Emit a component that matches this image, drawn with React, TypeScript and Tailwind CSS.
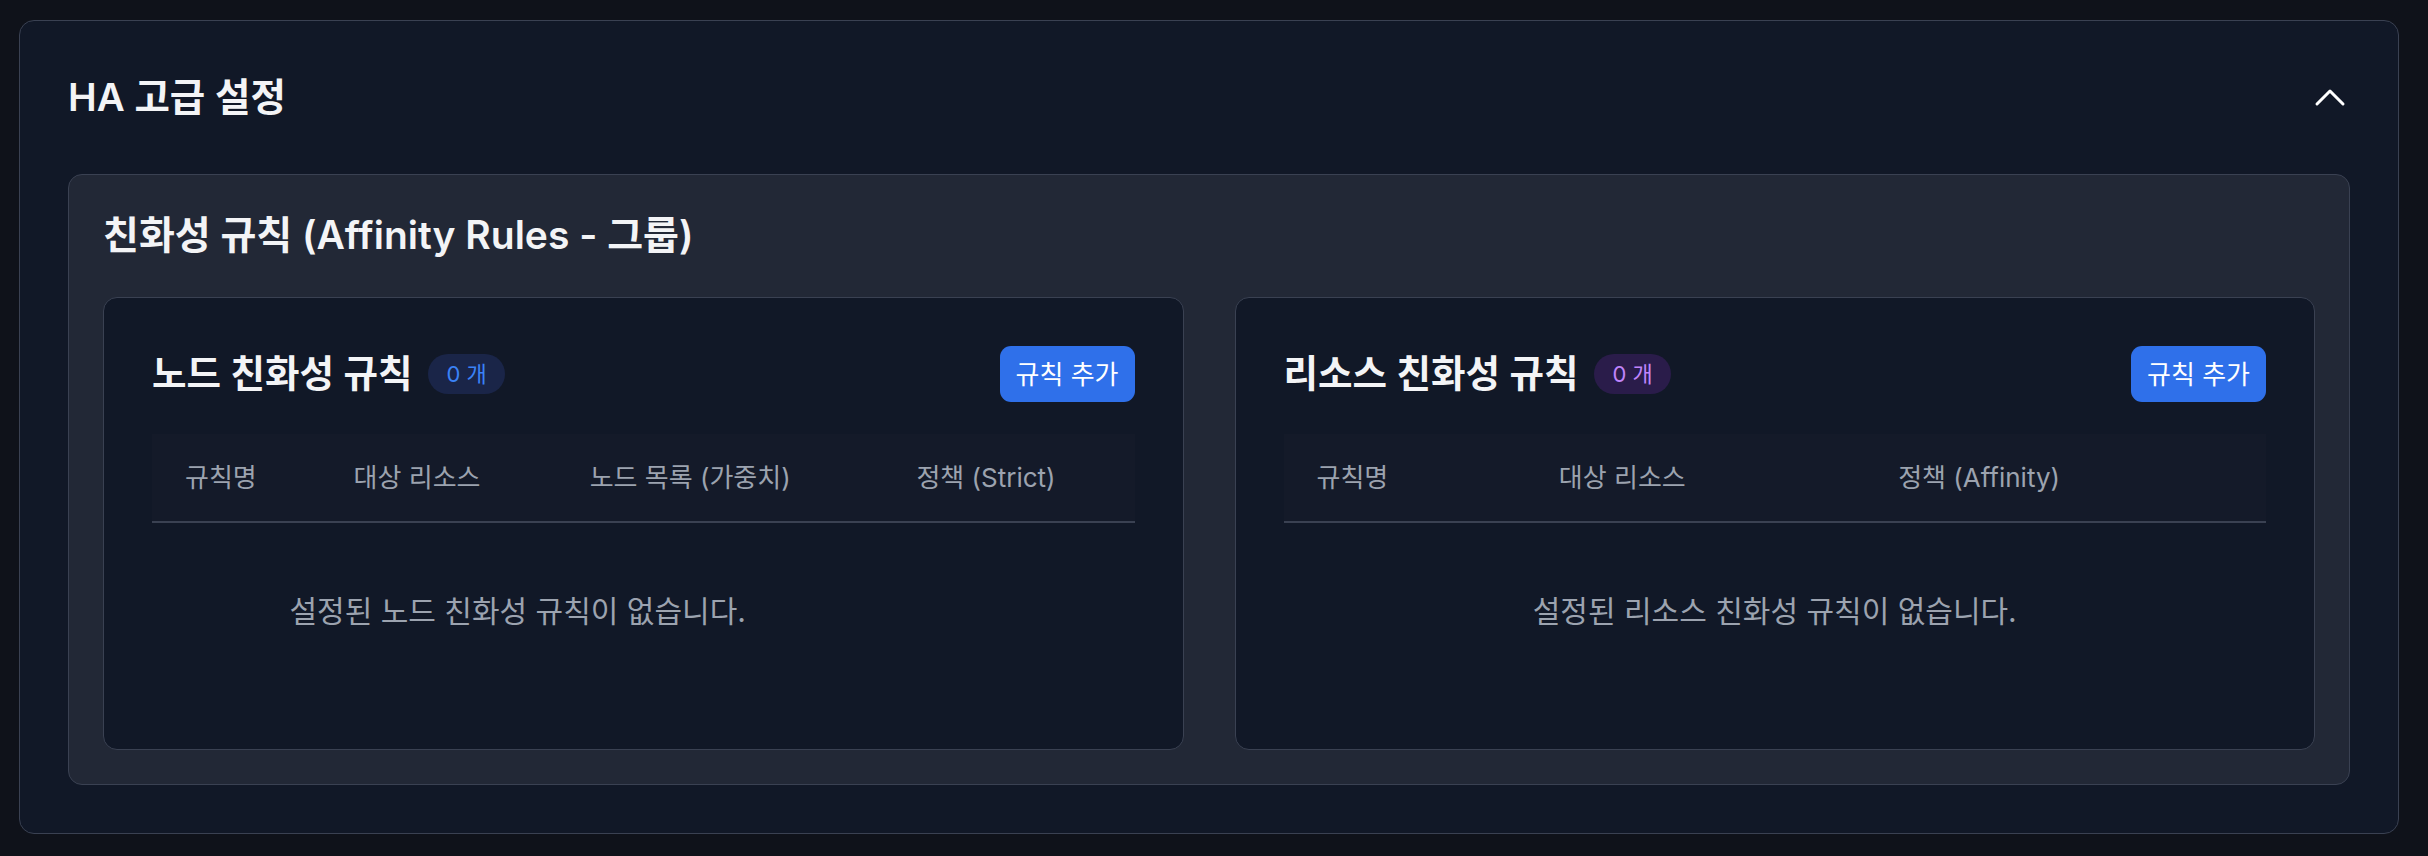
import React from "react"

const font = { fontFamily: '"Inter", "Noto Sans CJK KR", sans-serif' }

interface RuleCardProps {
  title: string
  badgeClass: string
  columns: string[]
  emptyText: string
}

function RuleCard({ title, badgeClass, columns, emptyText }: RuleCardProps) {
  return (
    <div className="rounded-[14px] border border-[#3a4152] bg-[#111827] p-[48px]">
      <div className="mb-[32px] flex h-[56px] items-center justify-between">
        <div className="flex items-center">
          <h3 className="text-[37.5px] font-semibold leading-[56px] text-[#f3f4f6]">{title}</h3>
          <span className={`ml-[16px] flex h-[40px] items-center rounded-full px-[18px] text-[22px] ${badgeClass}`}>
            0 개
          </span>
        </div>
        <button className="h-[56px] rounded-[11px] bg-[#2f70ea] px-[16px] text-[26px] text-white">
          규칙 추가
        </button>
      </div>

      <table className="w-full border-collapse">
        <thead>
          <tr className="border-b-2 border-[#3a4152] bg-[#141a29]">
            {columns.map(col => (
              <th
                key={col}
                className="h-[88px] px-[33px] text-left text-[26px] font-normal whitespace-nowrap text-[#9ca3af]"
              >
                {col}
              </th>
            ))}
          </tr>
        </thead>
        <tbody>
          <tr>
            <td colSpan={3} className="pb-[67px] pt-[66px] text-center text-[30px] leading-[45px] text-[#9ca3af]">
              {emptyText}
            </td>
          </tr>
        </tbody>
      </table>
    </div>
  )
}

export default function App() {
  return (
    <div className="min-h-screen bg-[#0f121a] pb-[23px] pl-[19px] pr-[29px] pt-[20px]" style={font}>
      <div className="rounded-[15px] border border-[#3a4152] bg-[#111827] p-[48px]">
        <div className="mb-[49px] flex h-[56px] items-center justify-between">
          <h2 className="text-[38.5px] font-semibold leading-[56px] text-[#f3f4f6]">HA 고급 설정</h2>
          <button className="flex h-[40px] w-[40px] items-center justify-center">
            <svg width="40" height="40" viewBox="0 0 40 40" fill="none">
              <polyline
                points="7,27 20,14 33,27"
                stroke="#ffffff"
                strokeWidth="3"
                strokeLinecap="round"
                strokeLinejoin="round"
              />
            </svg>
          </button>
        </div>

        <div className="rounded-[14px] border border-[#3a4152] bg-[#222836] p-[34px]">
          <h2 className="mb-[36px] text-[39px] font-semibold leading-[52px] text-[#f3f4f6]">
            친화성 규칙 (Affinity Rules - 그룹)
          </h2>
          <div className="grid grid-cols-2 gap-[51px]">
            <RuleCard
              title="노드 친화성 규칙"
              badgeClass="bg-[#1a2548] text-[#3b82f6]"
              columns={["규칙명", "대상 리소스", "노드 목록 (가중치)", "정책 (Strict)"]}
              emptyText="설정된 노드 친화성 규칙이 없습니다."
            />
            <RuleCard
              title="리소스 친화성 규칙"
              badgeClass="bg-[#2a1c4a] text-[#c084fc]"
              columns={["규칙명", "대상 리소스", "정책 (Affinity)"]}
              emptyText="설정된 리소스 친화성 규칙이 없습니다."
            />
          </div>
        </div>
      </div>
    </div>
  )
}
